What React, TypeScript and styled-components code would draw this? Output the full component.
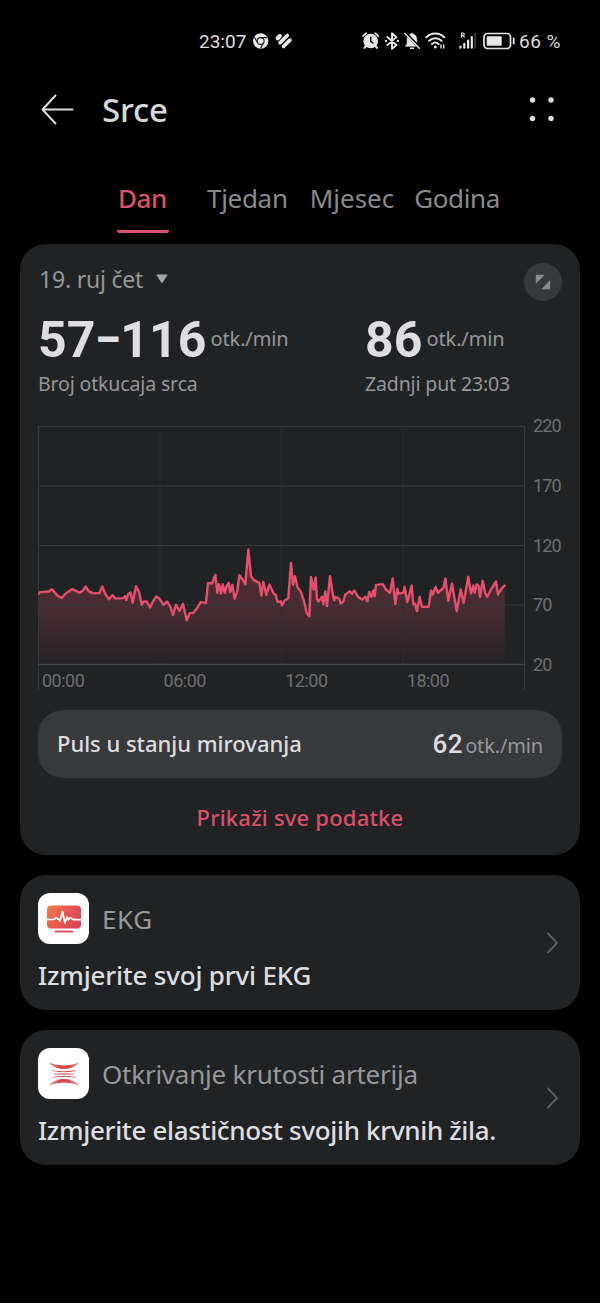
import React from 'react';
import styled, { createGlobalStyle } from 'styled-components';

const GlobalStyle = createGlobalStyle`
  * { box-sizing: border-box; }
  body { margin: 0; background: #000; font-family: 'Noto Sans', 'Open Sans', sans-serif; }
`;

const colors = {
  card: '#212224',
  pill: '#38393b',
  text: '#dedee0',
  muted: '#97989a',
  dim: '#6f7072',
  accent: '#d9516d',
  line: '#e5506e',
};

const Screen = styled.div`
  width: 600px;
  height: 1303px;
  background: #000;
  color: ${colors.text};
  display: flex;
  flex-direction: column;
  overflow: hidden;
`;

const StatusBar = styled.header`
  height: 82px;
  flex: none;
  display: flex;
  align-items: center;
  padding: 0 39px 0 199px;
  font: 400 19px/24px Roboto, sans-serif;
  color: #dededf;
  svg { display: block; flex: none; }
`;

const Clock = styled.span`
  width: 48px;
  margin-right: 5px;
  padding-top: 1px;
`;

const StatusIcons = styled.div`
  display: flex;
  align-items: center;
  margin-left: auto;
`;

const Percent = styled.span`
  width: 42px;
  margin-left: 4px;
  padding-top: 1px;
  letter-spacing: 0.5px;
  white-space: nowrap;
`;

const TitleBar = styled.div`
  height: 54px;
  flex: none;
  display: flex;
  align-items: center;
  padding: 0 43px 0 40px;
`;

const Title = styled.h1`
  flex: 1;
  margin: 0 0 0 27px;
  padding-top: 2px;
  font-size: 33px;
  line-height: 54px;
  font-weight: 500;
  letter-spacing: -0.2px;
  color: #d8d8d9;
`;

const Tabs = styled.nav`
  height: 108px;
  flex: none;
  display: flex;
  align-items: flex-start;
  padding: 40px 0 0 117px;
`;

const Tab = styled.a<{ $active?: boolean; $gap: number; $track?: number }>`
  margin-right: ${p => p.$gap}px;
  height: 57px;
  padding: 0 1px;
  min-width: 52px;
  font-size: 26px;
  line-height: 44px;
  font-weight: ${p => (p.$active ? 500 : 400)};
  letter-spacing: ${p => p.$track ?? 0}px;
  color: ${p => (p.$active ? colors.accent : '#8a8a8b')};
  border-bottom: 3px solid ${p => (p.$active ? colors.accent : 'transparent')};
  border-radius: 2px;
`;

const Card = styled.section<{ $height: number }>`
  height: ${p => p.$height}px;
  flex: none;
  margin: 0 20px 20px;
  padding: 0 18px;
  background: ${colors.card};
  border-radius: 26px;
`;

const DateRow = styled.div`
  display: flex;
  justify-content: space-between;
  height: 70px;
  padding-top: 19px;
`;

const DatePicker = styled.div`
  display: flex;
  align-items: center;
  height: 32px;
  padding-left: 1px;
  gap: 13px;
  font-size: 23px;
  letter-spacing: -0.2px;
  color: ${colors.muted};
`;

const RoundButton = styled.button`
  width: 38px;
  height: 38px;
  padding: 0;
  border: 0;
  border-radius: 50%;
  background: ${colors.pill};
  display: grid;
  place-items: center;
`;

const Stats = styled.div`
  display: grid;
  grid-template-columns: 327px 1fr;
  height: 112px;
`;

const Reading = styled.div`
  display: flex;
  height: 56px;
  line-height: 50px;
`;

const BigNumber = styled.span`
  font: 700 50px/53px Roboto, sans-serif;
  letter-spacing: 0.1px;
  color: ${colors.text};
`;

const Dash = styled.span`
  display: inline-block;
  margin: 0 -3.5px;
  transform: scaleX(0.8);
`;

const Unit = styled.span<{ $left: number; $track?: number }>`
  margin-left: ${p => p.$left}px;
  font-size: 20px;
  letter-spacing: ${p => p.$track ?? -0.15}px;
  color: ${colors.muted};
`;

const Caption = styled.div`
  font-size: 19.5px;
  line-height: 27px;
  letter-spacing: -0.14px;
  color: ${colors.muted};
`;

const ChartRow = styled.div`
  display: flex;
  height: 284px;
`;

const Plot = styled.div`
  width: 487px;
`;

const PlotSvg = styled.svg`
  display: block;
`;

const AxisX = styled.div`
  display: grid;
  grid-template-columns: repeat(4, 121.6px);
  margin-top: -22px;
  padding-left: 4px;
  font: 400 18px/24px Roboto, sans-serif;
  letter-spacing: -0.5px;
  color: ${colors.dim};
`;

const AxisY = styled.div`
  display: flex;
  flex-direction: column;
  justify-content: space-between;
  height: 263px;
  margin: -12px 0 0 8px;
  font: 400 18px/24px Roboto, sans-serif;
  letter-spacing: -0.9px;
  color: ${colors.dim};
`;

const Pill = styled.div`
  display: flex;
  align-items: center;
  justify-content: space-between;
  width: 524px;
  height: 68px;
  padding: 0 19px 0 19px;
  border-radius: 25px;
  background: ${colors.pill};
`;

const PillLabel = styled.span`
  font-size: 22px;
  font-weight: 500;
  letter-spacing: -0.02px;
  line-height: 66px;
  height: 68px;
`;

const PillValue = styled.span`
  display: flex;
  align-items: baseline;
  line-height: 66px;
  height: 66px;
`;

const PillNumber = styled.span`
  font-family: Roboto, sans-serif;
  font-size: 26px;
  font-weight: 500;
  letter-spacing: 0.6px;
`;

const LinkButton = styled.a`
  display: block;
  text-align: center;
  font-size: 22px;
  font-weight: 500;
  line-height: 78px;
  letter-spacing: 0.2px;
  color: ${colors.accent};
`;

const Feature = styled(Card)`
  display: flex;
  align-items: center;
  justify-content: space-between;
  padding-right: 21px;
`;

const FeatureBody = styled.div`
  padding-top: 2px;
`;

const FeatureHead = styled.div<{ $track: number }>`
  display: flex;
  align-items: center;
  height: 52px;
  gap: 13px;
  font-size: 26px;
  letter-spacing: ${p => p.$track}px;
  color: ${colors.muted};
`;

const AppIcon = styled.div`
  width: 51px;
  height: 51px;
  border-radius: 12px;
  background: #fff;
  display: grid;
  place-items: center;
`;

const FeatureText = styled.div<{ $track: number }>`
  margin-top: 11px;
  font-size: 26px;
  font-weight: 500;
  line-height: 39px;
  letter-spacing: ${p => p.$track}px;
  white-space: nowrap;
`;

/* Samples of the day, in thirds of a pixel: time from midnight, depth below the 103px mark. */
const samples =
  '2,193 6,188 16,187 33,186 42,179 51,190 60,200 72,205 82,193 92,186 102,179 114,184 125,190 134,184 143,171 152,185 163,191 184,191 193,171 202,194 213,209 223,197 232,207 256,206 262,200 265,211 272,192 278,189 284,220 294,170 304,190 311,226 317,216 326,216 336,234 346,214 355,201 365,208 376,226 387,216 396,230 405,256 414,226 425,244 435,223 446,272 455,251 466,250 476,238 488,218 504,220 510,160 522,162 532,136 538,190 543,164 549,192 554,164 560,190 566,170 572,160 577,188 583,166 590,208 598,185 604,137 614,150 622,164 631,60 639,140 648,152 664,160 670,198 676,157 685,196 694,165 706,190 713,196 719,218 728,215 732,228 740,213 751,206 759,100 765,165 771,140 778,172 788,186 798,215 806,250 814,260 819,142 827,180 833,144 837,208 842,216 852,202 856,224 862,186 867,230 876,140 886,205 889,212 892,202 904,208 908,222 916,216 922,195 936,185 942,193 949,183 960,202 972,210 982,202 988,215 994,187 1000,202 1006,183 1010,200 1014,166 1034,164 1044,180 1056,190 1064,147 1072,224 1078,178 1082,192 1096,190 1100,172 1108,218 1121,168 1126,225 1131,222 1137,245 1145,202 1152,232 1172,232 1179,183 1184,195 1193,172 1200,190 1208,182 1216,176 1222,147 1231,213 1242,162 1256,245 1268,180 1277,220 1291,142 1299,192 1306,168 1310,190 1316,165 1322,170 1326,202 1334,154 1342,192 1348,202 1360,178 1374,156 1380,195 1390,178 1400,168';

const HeartChart = () => (
  <PlotSvg width="488" height="265" viewBox="0 0 488 265" fill="none">
    <linearGradient id="chartFill" x1="0" y1="100" x2="0" y2="405" gradientUnits="userSpaceOnUse">
      <stop offset="0" stopColor="#e5506e" stopOpacity="0.27" />
      <stop offset="0.5" stopColor="#e5506e" stopOpacity="0.18" />
      <stop offset="1" stopColor="#e5506e" stopOpacity="0.01" />
    </linearGradient>
    <polygon points={`2,405 ${samples} 1400,405`} transform="translate(0 103.5) scale(0.33333)" fill="url(#chartFill)" />
    <g stroke="#343a3a">
      <path d="M0 .5H487M0 60H487M0 119.5H487M0 179H487" />
      <path d="M.5 0V264M486.5 0V264" />
      <path d="M122 0V239M243.5 0V239M365 0V239" stroke="#2b2e30" strokeDasharray="3 1" />
      <path d="M0 238.5H487" stroke="#3e4646" strokeWidth="1.5" />
    </g>
    <polyline
      points={samples}
      transform="translate(0 103.5) scale(0.33333)"
      stroke={colors.line}
      strokeWidth="7.2"
      strokeLinejoin="round"
      strokeLinecap="round"
    />
  </PlotSvg>
);

const Chevron = () => (
  <svg width="12" height="22" viewBox="0 0 12 22" fill="none" stroke="#5c5d5f" strokeWidth="2" strokeLinecap="round" strokeLinejoin="round">
    <path d="M1 1.500 10 11l-9 9.500" />
  </svg>
);

const StatusGlyphs = () => (
  <svg width="154" height="24" viewBox="361 29 154 24" fill="none" stroke="#e8e8e8" strokeLinecap="round">
    {/* alarm */}
    <g>
      <circle cx="370.700" cy="41" r="7.300" fill="#e8e8e8" stroke="none" />
      <path d="M363 36.300a10 10 0 0 1 3.200-3.100M378.400 36.300a10 10 0 0 0-3.200-3.100" strokeWidth="1.700" />
      <path d="m366 46-1.600 1.900M375.400 46l1.600 1.900" strokeWidth="2" />
      <path d="M370.700 37.300v4l2.300 1.700" stroke="#000" strokeWidth="1.400" />
    </g>
    {/* bluetooth */}
    <path d="m387.300 37 9.200 8-4.500 3.900V33.200l4.500 3.900-9.200 8" strokeWidth="1.900" strokeLinejoin="round" />
    <path d="M386 41h.1M397.800 41h.1" strokeWidth="2.300" />
    {/* muted bell */}
    <path d="M405.500 46.200h13l-1.700-2.300V39.500c0-3-1.700-5-3.700-5.500a1.200 1.200 0 0 0-2.300 0c-2.100.6-3.700 2.500-3.700 5.500v4.400z" fill="#e8e8e8" strokeWidth=".6" />
    <path d="M410.500 48.300h3" strokeWidth="1.600" />
    <path d="M405.800 33.500 419 47" stroke="#000" strokeWidth="3" />
    <path d="M404.800 33.500 419.300 48.300" strokeWidth="1.500" />
    {/* wifi */}
    <path d="M426.300 37.200c5.200-4.900 12.800-4.900 18 0M429 40.700c3.700-3.400 8.900-3.400 12.600 0M432 44c1.900-1.700 4.700-1.700 6.600 0" strokeWidth="2" />
    <circle cx="435.300" cy="47" r="1.500" fill="#e8e8e8" stroke="none" />
    <path d="M441 45v3M443.700 45v3" strokeWidth="1.400" />
    {/* signal */}
    <path d="M460.500 46.500v1.200M464.300 43.800v3.900M468.100 40.500v7.200M471.800 37v10.700" strokeWidth="2.200" />
    <path d="M475.200 33.500v14.200" stroke="#3b3b3b" strokeWidth="1.900" />
    <path d="M461.600 37.300V33h1.500a1.200 1.200 0 0 1 0 2.400h-1.500m1.700 0 1 1.900" strokeWidth="1.100" />
    {/* battery */}
    <rect x="484" y="33.500" width="26.500" height="15" rx="3.500" strokeWidth="1.700" />
    <rect x="486.700" y="36.200" width="15" height="9.600" rx="1" fill="#e8e8e8" stroke="none" />
    <path d="M513.700 38.500v5" strokeWidth="1.800" />
  </svg>
);

const NotificationGlyphs = () => (
  <svg width="41" height="24" viewBox="252 29 41 24" fill="none">
    <circle cx="260.700" cy="41" r="7.700" fill="#e8e8e8" />
    <circle cx="260.700" cy="41" r="3.400" stroke="#222" strokeWidth="1.100" />
    <path d="M260.700 37.600h6.600M257.700 42.700l-3.400-5.600M263.700 42.700l-3.300 5.700" stroke="#222" strokeWidth="1.100" />
    <g stroke="#e8e8e8" strokeWidth="3.700" strokeLinecap="round">
      <path d="M277.700 38.200 279.800 36.100" strokeWidth="4.200" />
      <path d="M280 42.800 287.300 35.500" />
      <path d="M283.500 46.500 289.900 40.100" />
    </g>
  </svg>
);

export default function App() {
  return (
    <Screen>
      <GlobalStyle />
      <StatusBar>
        <Clock>23:07</Clock>
        <NotificationGlyphs />
        <StatusIcons>
          <StatusGlyphs />
          <Percent>66 %</Percent>
        </StatusIcons>
      </StatusBar>

      <TitleBar>
        <svg width="35" height="32" viewBox="0 0 35 32" fill="none" stroke="#dcdcdd" strokeWidth="2" strokeLinecap="round" strokeLinejoin="round">
          <path d="M32.500 16.500H2.500M15.500 2.500 2.500 16.500l13 14" />
        </svg>
        <Title>Srce</Title>
        <svg width="30" height="28" viewBox="0 0 30 28" fill="#dcdcdd">
          <circle cx="5.500" cy="5" r="2.700" />
          <circle cx="24" cy="5" r="2.700" />
          <circle cx="5.500" cy="23.500" r="2.700" />
          <circle cx="24" cy="23.500" r="2.700" />
        </svg>
      </TitleBar>

      <Tabs>
        <Tab $active $gap={37} $track={-0.5}>Dan</Tab>
        <Tab $gap={20} $track={-0.3}>Tjedan</Tab>
        <Tab $gap={18}>Mjesec</Tab>
        <Tab $gap={0} $track={-0.4}>Godina</Tab>
      </Tabs>

      <Card $height={611}>
        <DateRow>
          <DatePicker>
            19. ruj čet
            <svg width="12" height="10" viewBox="0 0 12 10" fill="#a5a6a8">
              <path d="M1.500.500h9q1.500 0 .6 1.300L6.900 8.300q-.9 1.200-1.800 0L.9 1.800Q0 .500 1.500.500z" />
            </svg>
          </DatePicker>
          <RoundButton>
            <svg width="16" height="16" viewBox="0 0 16 16" fill="#8b8c8e">
              <path d="M1.700.800h8L.800 9.700v-8q0-.9.900-.9zM14.300 15.200h-8l8.900-8.900v8q0 .9-.9.900z" />
            </svg>
          </RoundButton>
        </DateRow>

        <Stats>
          <div>
            <Reading>
              <BigNumber>57<Dash>–</Dash>116</BigNumber>
              <Unit $left={4}>otk./min</Unit>
            </Reading>
            <Caption>Broj otkucaja srca</Caption>
          </div>
          <div>
            <Reading>
              <BigNumber>86</BigNumber>
              <Unit $left={4}>otk./min</Unit>
            </Reading>
            <Caption>Zadnji put 23:03</Caption>
          </div>
        </Stats>

        <ChartRow>
          <Plot>
            <HeartChart />
            <AxisX>
              <span>00:00</span>
              <span>06:00</span>
              <span>12:00</span>
              <span>18:00</span>
            </AxisX>
          </Plot>
          <AxisY>
            <span>220</span>
            <span>170</span>
            <span>120</span>
            <span>70</span>
            <span>20</span>
          </AxisY>
        </ChartRow>

        <Pill>
          <PillLabel>Puls u stanju mirovanja</PillLabel>
          <PillValue>
            <PillNumber>62</PillNumber>
            <Unit $left={2}>otk./min</Unit>
          </PillValue>
        </Pill>
        <LinkButton>Prikaži sve podatke</LinkButton>
      </Card>

      <Feature $height={135}>
        <FeatureBody>
          <FeatureHead $track={0.6}>
            <AppIcon>
              <svg width="36" height="28" viewBox="0 0 36 28" fill="none">
                <defs>
                  <linearGradient id="ecg" x1="0" y1="0" x2="1" y2="0.500">
                    <stop offset="0" stopColor="#f18349" />
                    <stop offset="0.500" stopColor="#e85a50" />
                    <stop offset="1" stopColor="#da4857" />
                  </linearGradient>
                </defs>
                <rect x="1" y="0.500" width="34" height="23" rx="4" fill="url(#ecg)" />
                <path d="M1 14.500h6.500q1 0 1.700-1.200t1.900-.3q.8 1.500 2 1.500l.8 1.600L16.500 6.500l2.400 11.500 2.200-6 1.400 2.800q1.700-3.300 3.200-1.200 1 1 2 1H35" stroke="#fff" strokeWidth="1.700" strokeLinejoin="round" />
                <path d="M9.500 26.500h17" stroke="#dc5560" strokeWidth="2" strokeLinecap="round" />
              </svg>
            </AppIcon>
            EKG
          </FeatureHead>
          <FeatureText $track={-0.2}>Izmjerite svoj prvi EKG</FeatureText>
        </FeatureBody>
        <Chevron />
      </Feature>

      <Feature $height={135}>
        <FeatureBody>
          <FeatureHead $track={-0.23}>
            <AppIcon>
              <svg width="34" height="26" viewBox="0 0 34 26" fill="none">
                <defs>
                  <linearGradient id="artery" x1="0" y1="0" x2="34" y2="0" gradientUnits="userSpaceOnUse">
                    <stop offset="0" stopColor="#d64b4f" stopOpacity="0.1" />
                    <stop offset="0.350" stopColor="#d64b4f" />
                    <stop offset="0.650" stopColor="#d64b4f" />
                    <stop offset="1" stopColor="#d64b4f" stopOpacity="0.1" />
                  </linearGradient>
                </defs>
                <path d="M2 2Q17 8 32 2 17 13 2 2zM2 24Q17 18 32 24 17 13 2 24z" fill="url(#artery)" stroke="url(#artery)" strokeWidth="1.200" />
                <path d="M5 9.500q12 2.400 24 .1M6.500 13h21l.01.01M5 16.500q12-2.400 24-.1" stroke="url(#artery)" strokeWidth="1.200" />
              </svg>
            </AppIcon>
            Otkrivanje krutosti arterija
          </FeatureHead>
          <FeatureText $track={-0.34}>Izmjerite elastičnost svojih krvnih žila.</FeatureText>
        </FeatureBody>
        <Chevron />
      </Feature>
    </Screen>
  );
}
